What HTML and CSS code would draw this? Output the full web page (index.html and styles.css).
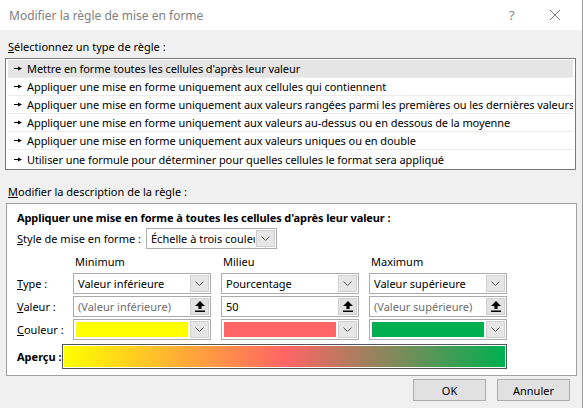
FILE: index.html
```html
<!DOCTYPE html>
<html lang="fr">
<head>
<meta charset="utf-8">
<title>Modifier la règle de mise en forme</title>
<link rel="stylesheet" href="styles.css">
</head>
<body>
<div class="win">
  <div class="titlebar">
    <span class="title">Modifier la règle de mise en forme</span>
    <span class="help">?</span>
    <span class="close"><svg width="12" height="12" viewBox="0 0 12 12"><path d="M1 1L11 11M11 1L1 11" stroke="#777" stroke-width="1" fill="none"/></svg></span>
  </div>
  <div class="content">
    <div class="lbl lbl-top"><u>S</u>électionnez un type de règle :</div>
    <ul class="list">
      <li class="item selected"><svg class="arrow" width="8" height="5" viewBox="0 0 8 5"><path d="M0 2.5H4" stroke="#000" stroke-width="1"/><path d="M4 0.5L8 2.5L4 4.5Z" fill="#000"/></svg>Mettre en forme toutes les cellules d'après leur valeur</li>
      <li class="item"><svg class="arrow" width="8" height="5" viewBox="0 0 8 5"><path d="M0 2.5H4" stroke="#000" stroke-width="1"/><path d="M4 0.5L8 2.5L4 4.5Z" fill="#000"/></svg>Appliquer une mise en forme uniquement aux cellules qui contiennent</li>
      <li class="item"><svg class="arrow" width="8" height="5" viewBox="0 0 8 5"><path d="M0 2.5H4" stroke="#000" stroke-width="1"/><path d="M4 0.5L8 2.5L4 4.5Z" fill="#000"/></svg>Appliquer une mise en forme uniquement aux valeurs rangées parmi les premières ou les dernières valeurs</li>
      <li class="item"><svg class="arrow" width="8" height="5" viewBox="0 0 8 5"><path d="M0 2.5H4" stroke="#000" stroke-width="1"/><path d="M4 0.5L8 2.5L4 4.5Z" fill="#000"/></svg>Appliquer une mise en forme uniquement aux valeurs au-dessus ou en dessous de la moyenne</li>
      <li class="item"><svg class="arrow" width="8" height="5" viewBox="0 0 8 5"><path d="M0 2.5H4" stroke="#000" stroke-width="1"/><path d="M4 0.5L8 2.5L4 4.5Z" fill="#000"/></svg>Appliquer une mise en forme uniquement aux valeurs uniques ou en double</li>
      <li class="item last"><svg class="arrow" width="8" height="5" viewBox="0 0 8 5"><path d="M0 2.5H4" stroke="#000" stroke-width="1"/><path d="M4 0.5L8 2.5L4 4.5Z" fill="#000"/></svg>Utiliser une formule pour déterminer pour quelles cellules le format sera appliqué</li>
    </ul>
    <div class="lbl lbl-desc"><u>M</u>odifier la description de la règle :</div>
    <div class="group">
      <div class="gtitle">Appliquer une mise en forme à toutes les cellules d'après leur valeur :</div>
      <div class="stylerow">
        <span class="rlabel"><u>S</u>tyle de mise en forme :</span>
        <div class="select style-select"><span class="stext">Échelle à trois couleu</span><span class="dd"><svg width="9" height="5" viewBox="0 0 9 5"><path d="M0.5 0.5L4.5 4.5L8.5 0.5" stroke="#555" fill="none"/></svg></span></div>
      </div>
      <div class="grid">
        <span></span>
        <span class="colhead">Minimum</span>
        <span class="colhead">Milieu</span>
        <span class="colhead">Maximum</span>

        <span class="rlabel"><u>T</u>ype :</span>
        <div class="select"><span class="stext">Valeur inférieure</span><span class="dd"><svg width="9" height="5" viewBox="0 0 9 5"><path d="M0.5 0.5L4.5 4.5L8.5 0.5" stroke="#555" fill="none"/></svg></span></div>
        <div class="select"><span class="stext">Pourcentage</span><span class="dd"><svg width="9" height="5" viewBox="0 0 9 5"><path d="M0.5 0.5L4.5 4.5L8.5 0.5" stroke="#555" fill="none"/></svg></span></div>
        <div class="select"><span class="stext">Valeur supérieure</span><span class="dd"><svg width="9" height="5" viewBox="0 0 9 5"><path d="M0.5 0.5L4.5 4.5L8.5 0.5" stroke="#555" fill="none"/></svg></span></div>

        <span class="rlabel"><u>V</u>aleur :</span>
        <div class="input"><span class="itext placeholder">(Valeur inférieure)</span><span class="ref"><svg width="10" height="11" viewBox="0 0 10 11"><path d="M5 0L10 5H6.6V8H3.4V5H0Z" fill="#000"/><rect x="0" y="9.5" width="10" height="1.5" fill="#000"/></svg></span></div>
        <div class="input"><span class="itext">50</span><span class="ref"><svg width="10" height="11" viewBox="0 0 10 11"><path d="M5 0L10 5H6.6V8H3.4V5H0Z" fill="#000"/><rect x="0" y="9.5" width="10" height="1.5" fill="#000"/></svg></span></div>
        <div class="input"><span class="itext placeholder">(Valeur supérieure)</span><span class="ref"><svg width="10" height="11" viewBox="0 0 10 11"><path d="M5 0L10 5H6.6V8H3.4V5H0Z" fill="#000"/><rect x="0" y="9.5" width="10" height="1.5" fill="#000"/></svg></span></div>

        <span class="rlabel"><u>C</u>ouleur :</span>
        <div class="select color"><span class="swatch yellow"></span><span class="dd"><svg width="9" height="5" viewBox="0 0 9 5"><path d="M0.5 0.5L4.5 4.5L8.5 0.5" stroke="#555" fill="none"/></svg></span></div>
        <div class="select color"><span class="swatch red"></span><span class="dd"><svg width="9" height="5" viewBox="0 0 9 5"><path d="M0.5 0.5L4.5 4.5L8.5 0.5" stroke="#555" fill="none"/></svg></span></div>
        <div class="select color"><span class="swatch green"></span><span class="dd"><svg width="9" height="5" viewBox="0 0 9 5"><path d="M0.5 0.5L4.5 4.5L8.5 0.5" stroke="#555" fill="none"/></svg></span></div>
      </div>
      <div class="apercu">
        <span class="alabel">Aperçu :</span>
        <div class="preview"><div class="gradient"></div></div>
      </div>
    </div>
    <div class="buttons">
      <button class="btn">OK</button>
      <button class="btn">Annuler</button>
    </div>
  </div>
</div>
</body>
</html>
```

FILE: styles.css
```css
* { box-sizing: border-box; }
html, body { margin: 0; padding: 0; }
body {
  width: 583px;
  height: 408px;
  overflow: hidden;
  background: #f0f0f0;
  font-family: "Noto Sans", "Segoe UI", sans-serif;
  font-size: 11px;
  color: #000;
}
.win {
  width: 583px;
  height: 408px;
  border-right: 1px solid #9a9a9a;
  display: flex;
  flex-direction: column;
}
.titlebar {
  height: 30px;
  background: #fff;
  display: flex;
  align-items: center;
  padding-left: 9px;
}
.title {
  flex: 1;
  color: #808080;
  font-size: 12px;
}
.help {
  color: #808080;
  font-size: 13px;
  width: 16px;
  margin-right: 24px;
}
.close {
  width: 12px;
  height: 12px;
  margin-right: 21px;
  display: flex;
}
.content {
  flex: 1;
  display: flex;
  flex-direction: column;
  padding: 0 0 0 5px;
}
.lbl {
  line-height: 16px;
  height: 16px;
  padding-left: 3px;
}
.lbl-top { margin-top: 9px; }
.lbl-desc { margin-top: 14px; }
.list {
  list-style: none;
  margin: 3px 0 0 0;
  padding: 1px 2px;
  width: 571px;
  height: 112px;
  background: #fff;
  border: 1px solid #7a7a7a;
}
.item {
  height: 18px;
  line-height: 17px;
  border-bottom: 1px solid #ececec;
  display: flex;
  align-items: center;
  white-space: nowrap;
  overflow: hidden;
  letter-spacing: -0.08px;
}
.item.last { border-bottom: none; }
.item.selected { background: #e5e5e5; }
.arrow {
  margin: 0 5px 0 6px;
  flex: none;
}
.group {
  margin-top: 3px;
  width: 571px;
  height: 173px;
  margin-left: 1px;
  background: #fff;
  border: 1px solid #a0a0a0;
  padding: 6px 0 0 10px;
  display: flex;
  flex-direction: column;
}
.gtitle {
  font-weight: bold;
  line-height: 16px;
  height: 16px;
  letter-spacing: -0.1px;
}
.stylerow {
  display: flex;
  align-items: center;
  height: 22px;
  margin-top: 1px;
}
.stylerow .rlabel { width: 129px; }
.select {
  height: 21px;
  border: 1px solid #acacac;
  background: #fff;
  display: flex;
  align-items: stretch;
}
.style-select { width: 131px; }
.stext, .itext {
  flex: 1;
  padding-left: 4px;
  line-height: 19px;
  white-space: nowrap;
  overflow: hidden;
}
.dd {
  width: 19px;
  flex: none;
  margin: 1px;
  background: #e6e6e6;
  border: 1px solid #d0d0d0;
  display: flex;
  align-items: center;
  justify-content: center;
}
.grid {
  display: grid;
  grid-template-columns: 46px 138px 138px 138px;
  column-gap: 10px;
  row-gap: 2px;
  margin-top: 5px;
}
.colhead {
  line-height: 16px;
  padding-left: 2px;
  margin-bottom: 1px;
}
.rlabel {
  line-height: 21px;
  white-space: nowrap;
}
.input {
  height: 21px;
  border: 1px solid #acacac;
  background: #fff;
  display: flex;
  align-items: stretch;
}
.placeholder { color: #6d6d6d; }
.ref {
  width: 19px;
  flex: none;
  margin: 1px;
  background: #e1e1e1;
  border: 1px solid #cfcfcf;
  display: flex;
  align-items: center;
  justify-content: center;
}
.color { padding: 2px 0 2px 2px; }
.color .dd { margin: -1px 1px -1px 2px; }
.swatch { flex: 1; }
.yellow { background: #ffff00; }
.red { background: #ff6565; }
.green { background: #00b050; }
.apercu {
  display: flex;
  align-items: center;
  margin-top: 4px;
}
.alabel {
  font-weight: bold;
  width: 45px;
}
.preview {
  width: 445px;
  height: 25px;
  border: 1px solid #555;
  padding: 1px;
  background: #fff;
}
.gradient {
  height: 100%;
  background: linear-gradient(to right, #ffff00 0%, #ff6565 50%, #00b050 100%);
}
.buttons {
  display: flex;
  justify-content: flex-end;
  gap: 11px;
  padding-right: 12px;
  margin-top: 3px;
}
.btn {
  width: 73px;
  height: 22px;
  background: #e1e1e1;
  border: 1px solid #adadad;
  font-family: inherit;
  font-size: 11px;
  color: #000;
  padding: 0;
}
```
